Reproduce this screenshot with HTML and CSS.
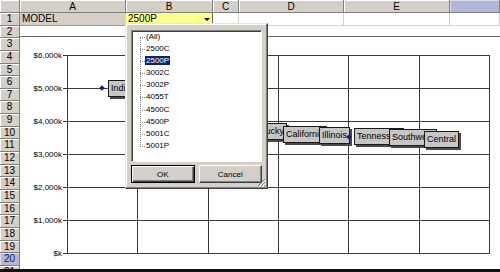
FILE: index.html
```html
<!DOCTYPE html>
<html lang="en">
<head>
  <meta charset="UTF-8">
  <title>Model sales chart</title>
  <link rel="stylesheet" href="styles.css">
</head>
<body>
  <div class="window">
    <!-- worksheet grid -->
    <div class="sheet">
      <div class="corner"></div>
      <div class="col-head">A</div>
      <div class="col-head">B</div>
      <div class="col-head">C</div>
      <div class="col-head">D</div>
      <div class="col-head">E</div>
      <div class="col-head col-active"></div>

      <div class="row-head">1</div>
      <div class="cell cell-label">MODEL</div>
      <div class="cell cell-filter">2500P<span class="filter-arrow"></span></div>
      <div class="cell"></div>
      <div class="cell"></div>
      <div class="cell"></div>
      <div class="cell"></div>

      <div class="row-head">2</div>
      <div class="cell cell-wide"></div>
      <div class="row-head">3</div>
      <div class="cell cell-wide"></div>
      <div class="row-head">4</div>
      <div class="cell cell-wide"></div>
      <div class="row-head">5</div>
      <div class="cell cell-wide"></div>
      <div class="row-head">6</div>
      <div class="cell cell-wide"></div>
      <div class="row-head">7</div>
      <div class="cell cell-wide"></div>
      <div class="row-head">8</div>
      <div class="cell cell-wide"></div>
      <div class="row-head">9</div>
      <div class="cell cell-wide"></div>
      <div class="row-head">10</div>
      <div class="cell cell-wide"></div>
      <div class="row-head">11</div>
      <div class="cell cell-wide"></div>
      <div class="row-head">12</div>
      <div class="cell cell-wide"></div>
      <div class="row-head">13</div>
      <div class="cell cell-wide"></div>
      <div class="row-head">14</div>
      <div class="cell cell-wide"></div>
      <div class="row-head">15</div>
      <div class="cell cell-wide"></div>
      <div class="row-head">16</div>
      <div class="cell cell-wide"></div>
      <div class="row-head">17</div>
      <div class="cell cell-wide"></div>
      <div class="row-head">18</div>
      <div class="cell cell-wide"></div>
      <div class="row-head">19</div>
      <div class="cell cell-wide"></div>
      <div class="row-head row-active">20</div>
      <div class="cell cell-wide"></div>
      <div class="row-head">21</div>
      <div class="cell cell-wide"></div>
    </div>

    <!-- embedded chart object -->
    <div class="chart">
      <div class="chart-body">
        <div class="y-axis">
          <div class="y-label">$6,000k</div>
          <div class="y-label">$5,000k</div>
          <div class="y-label">$4,000k</div>
          <div class="y-label">$3,000k</div>
          <div class="y-label">$2,000k</div>
          <div class="y-label">$1,000k</div>
          <div class="y-label">$k</div>
        </div>
        <div class="plot">
          <div></div><div></div><div></div><div></div><div></div><div></div>
          <div></div><div></div><div></div><div></div><div></div><div></div>
          <div></div><div></div><div></div><div></div><div></div><div></div>
          <div></div><div></div><div></div><div></div><div></div><div></div>
          <div></div><div></div><div></div><div></div><div></div><div></div>
          <div></div><div></div><div></div><div></div><div></div><div></div>
        </div>
      </div>

      <!-- data points and their labels -->
      <span class="marker" style="left: 80px; top: 49px;"></span>
      <span class="data-label" style="left: 88px; top: 43px;">Indiana</span>
      <span class="data-label" style="left: 224px; top: 86px;">Kentucky</span>
      <span class="data-label" style="left: 263px; top: 89px;">California</span>
      <span class="data-label" style="left: 299px; top: 90px;">Illinois</span>
      <span class="marker" style="left: 327px; top: 98px;"></span>
      <span class="data-label" style="left: 334px; top: 91px;">Tennessee</span>
      <span class="data-label" style="left: 369px; top: 92px;">Southwest</span>
      <span class="data-label" style="left: 404px; top: 94px;">Central</span>
    </div>

    <!-- pivot field drop-down -->
    <div class="dropdown">
      <div class="listbox">
        <ul class="tree">
          <li>(All)</li>
          <li>2500C</li>
          <li><span class="selected">2500P</span></li>
          <li>3002C</li>
          <li>3002P</li>
          <li>4055T</li>
          <li>4500C</li>
          <li>4500P</li>
          <li>5001C</li>
          <li>5001P</li>
        </ul>
      </div>
      <div class="buttons">
        <button class="btn btn-default">OK</button>
        <button class="btn">Cancel</button>
      </div>
      <svg class="grip" width="9" height="9" viewBox="0 0 9 9">
        <path d="M8 1 L1 8 M8 4 L4 8 M8 7 L7 8" stroke="#808080" stroke-width="1"/>
        <path d="M9 2 L2 9 M9 5 L5 9" stroke="#ffffff" stroke-width="1"/>
      </svg>
    </div>
  </div>
</body>
</html>
```

FILE: styles.css
```css
body {
    margin: 0;
    background: #ffffff;
    font-family: 'Liberation Sans', Arial, sans-serif;
}

.window {
    position: relative;
    width: 500px;
    height: 269px;
    overflow: hidden;
    border-bottom: 3px solid #111111;
    background: #ffffff;
}

/* Worksheet */
.sheet {
    display: grid;
    grid-template-columns: 20px 106px 87px 26px 105px 106px 50px;
    grid-template-rows: 13px repeat(21, 12.65px);
    font-size: 10px;
    color: #000000;
}

.corner,
.col-head,
.row-head {
    background: #d4d0c8;
    box-sizing: border-box;
    border-right: 1px solid #808080;
    border-bottom: 1px solid #808080;
    box-shadow: inset 1px 1px 0 #ffffff;
}

.col-head {
    text-align: center;
    line-height: 13px;
}

.col-active {
    background: #b0b7d6;
    box-shadow: inset 1px 1px 0 #d8dcee;
}

.row-head {
    text-align: center;
    line-height: 12px;
}

.row-active {
    background: #b0b7d6;
    color: #0a1a5a;
    box-shadow: inset 1px 1px 0 #d8dcee;
}

.cell {
    box-sizing: border-box;
    border-right: 1px solid #d0d0d0;
    border-bottom: 1px solid #d0d0d0;
    line-height: 12px;
    padding-left: 2px;
    white-space: nowrap;
}

.cell-wide {
    grid-column: 2 / -1;
    border-right: none;
}

.cell-label {
    background: #d4d0c8;
    border-bottom-color: #9a9a9a;
}

.cell-filter {
    display: flex;
    justify-content: space-between;
    align-items: stretch;
    background: #ffff8c;
    padding-right: 0;
    border-bottom-color: #9a9a9a;
    border-right-color: #606060;
}

.filter-arrow {
    position: relative;
    width: 11px;
    background: #ffff8c;
}

.filter-arrow::after {
    content: '';
    position: absolute;
    left: 3px;
    top: 5px;
    border-left: 3px solid transparent;
    border-right: 3px solid transparent;
    border-top: 3px solid #000000;
}

/* Chart object */
.chart {
    position: absolute;
    left: 20px;
    top: 36px;
    width: 480px;
    height: 233px;
    background: #ffffff;
    border-top: 1px solid #6a6a6a;
    font-size: 8px;
}

.chart-body {
    display: flex;
    padding-top: 18px;
}

.y-axis {
    width: 47px;
    display: grid;
    grid-auto-rows: 33px;
    margin-top: -16.5px;
}

.y-label {
    display: flex;
    justify-content: flex-end;
    align-items: center;
    gap: 1px;
}

.y-label::after {
    content: '';
    width: 4px;
    height: 1px;
    background: #333333;
}

.plot {
    width: 423px;
    height: 199px;
    box-sizing: border-box;
    display: grid;
    grid-template-columns: repeat(6, 1fr);
    grid-template-rows: repeat(6, 1fr);
    border-left: 1px solid #3a3a3a;
    border-top: 1px solid #3a3a3a;
}

.plot div {
    border-right: 1px solid #3a3a3a;
    border-bottom: 1px solid #3a3a3a;
}

.marker {
    position: absolute;
    width: 4px;
    height: 4px;
    background: #1a1a80;
    transform: rotate(45deg);
}

.data-label {
    position: absolute;
    font-size: 9px;
    line-height: 15px;
    padding: 0 2px;
    background: #c6c6c6;
    border: 1px solid #1a1a1a;
    box-shadow: 2px 2px 0 #4a4a4a;
    white-space: nowrap;
}

/* Drop-down panel */
.dropdown {
    position: absolute;
    left: 125px;
    top: 23px;
    width: 143px;
    height: 166px;
    box-sizing: border-box;
    padding: 6px 5px 0 5px;
    background: #d4d0c8;
    border: 1px solid;
    border-color: #e8e6e0 #404040 #404040 #e8e6e0;
    box-shadow: inset -1px -1px 0 #808080, inset 1px 1px 0 #ffffff;
    font-size: 8px;
}

.listbox {
    height: 132px;
    box-sizing: border-box;
    background: #ffffff;
    border: 1px solid;
    border-color: #808080 #ffffff #ffffff #808080;
    box-shadow: inset 1px 1px 0 #404040;
}

.tree {
    position: relative;
    list-style: none;
    margin: 0;
    padding: 0 0 0 14px;
}

.tree::before {
    content: '';
    position: absolute;
    left: 8px;
    top: 6px;
    height: 110px;
    border-left: 1px dotted #808080;
}

.tree li {
    position: relative;
    height: 12.1px;
    line-height: 12px;
}

.tree li::before {
    content: '';
    position: absolute;
    left: -6px;
    top: 6px;
    width: 5px;
    border-top: 1px dotted #808080;
}

.selected {
    background: #0a246a;
    color: #ffffff;
    padding: 0 1px;
    margin-left: -1px;
}

.buttons {
    display: flex;
    gap: 4px;
    margin-top: 3px;
}

.btn {
    flex: 1;
    height: 18px;
    padding: 0;
    font-family: inherit;
    font-size: 8px;
    color: #000000;
    background: #d4d0c8;
    border: 1px solid;
    border-color: #ffffff #404040 #404040 #ffffff;
    box-shadow: inset -1px -1px 0 #808080;
}

.btn-default {
    border-color: #000000;
    box-shadow: inset 1px 1px 0 #ffffff, inset -1px -1px 0 #404040, inset -2px -2px 0 #808080;
}

.grip {
    position: absolute;
    right: 1px;
    bottom: 1px;
}
```
